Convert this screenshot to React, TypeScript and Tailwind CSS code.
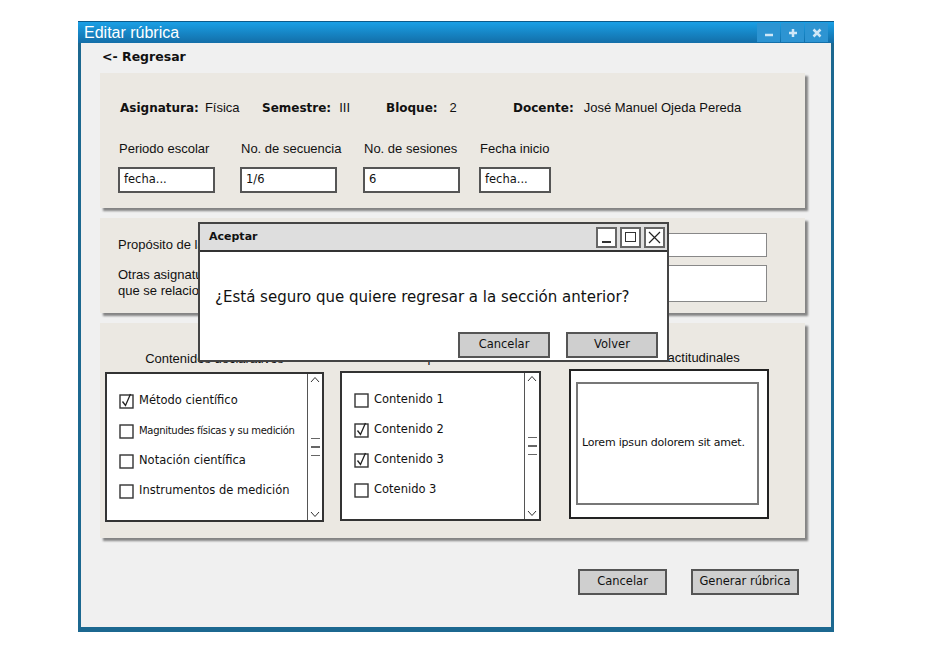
import React from 'react';

const comic = "font-['DejaVu_Sans',sans-serif]";
const sans = "font-['Liberation_Sans',Arial,sans-serif]";

function Check({ checked }: { checked?: boolean }) {
  return (
    <svg width="16" height="16" viewBox="0 0 16 16" className="shrink-0">
      <rect x="1" y="2" width="13" height="13" fill="white" stroke="#333" strokeWidth="1.4" />
      {checked && <path d="M3.5 8.5 L6.5 12.5 L11.5 1" fill="none" stroke="#222" strokeWidth="1.3" />}
    </svg>
  );
}

function ListBox({ width, items }: { width: string; items: { label: string; checked?: boolean; small?: boolean }[] }) {
  return (
    <div className={`${width} h-[150px] border-2 border-[#333] bg-white flex`}>
      <div className="flex-1 flex flex-col pl-[12px] pt-[18px] gap-[13px]">
        {items.map((it) => (
          <div key={it.label} className="flex items-center gap-[4px] h-[17px]">
            <Check checked={it.checked} />
            <span className={`${comic} text-[#111] ${it.small ? 'text-[10px] tracking-[-0.3px]' : 'text-[11.5px]'} whitespace-nowrap`}>{it.label}</span>
          </div>
        ))}
      </div>
      <div className="w-[15px] border-l border-[#555] flex flex-col items-center justify-between py-[2px] text-[#333]">
        <svg width="10" height="8" viewBox="0 0 10 8"><path d="M1 6 L5 1.5 L9 6" fill="none" stroke="#333" strokeWidth="1" /></svg>
        <div className="flex flex-col gap-[7px] w-[9px]">
          <div className="h-[1.5px] bg-[#666]" />
          <div className="h-[1.5px] bg-[#666]" />
          <div className="h-[1.5px] bg-[#666]" />
        </div>
        <svg width="10" height="8" viewBox="0 0 10 8"><path d="M1 2 L5 6.5 L9 2" fill="none" stroke="#333" strokeWidth="1" /></svg>
      </div>
    </div>
  );
}

function Field({ value, width }: { value: string; width: string }) {
  return (
    <div className={`${width} h-[26px] border-2 border-[#555] bg-white flex items-center px-[4px] ${comic} text-[11.5px] text-[#111]`}>
      {value}
    </div>
  );
}

function SketchButton({ label, width }: { label: string; width: string }) {
  return (
    <button className={`${width} h-[26px] bg-[#cfcfcf] border-2 border-[#555] ${comic} text-[11.5px] text-[#111]`}>
      {label}
    </button>
  );
}

export default function App() {
  const panel = 'bg-[#ebe8e2] shadow-[3px_3px_2px_rgba(0,0,0,0.45)]';

  return (
    <div className="w-[950px] h-[650px] bg-white relative overflow-hidden">
      <div className="absolute left-[78px] top-[21px] w-[756px] h-[611px] bg-[#1c6890] flex flex-col px-[3px] pb-[5px]">
        {/* Title bar */}
        <div className="h-[22px] flex items-center justify-between bg-gradient-to-b from-[#1aa0e6] to-[#136ea8] -mx-[3px] px-[6px] border-t border-[#0d5a8a]">
          <span className={`${sans} text-white text-[16px] leading-none`}>Editar rúbrica</span>
          <div className="flex gap-[1px]">
            <div className="w-[23px] h-[19px] bg-[#2d94d2] flex items-center justify-center">
              <svg width="10" height="10" viewBox="0 0 10 10"><path d="M1 7 H9" stroke="#cfe7f7" strokeWidth="2.5" /></svg>
            </div>
            <div className="w-[23px] h-[19px] bg-[#2d94d2] flex items-center justify-center">
              <svg width="10" height="10" viewBox="0 0 10 10"><path d="M1 5 H9 M5 1 V9" stroke="#cfe7f7" strokeWidth="2.5" /></svg>
            </div>
            <div className="w-[23px] h-[19px] bg-[#2d94d2] flex items-center justify-center">
              <svg width="10" height="10" viewBox="0 0 10 10"><path d="M1.5 1.5 L8.5 8.5 M8.5 1.5 L1.5 8.5" stroke="#cfe7f7" strokeWidth="2.5" /></svg>
            </div>
          </div>
        </div>

        {/* Content */}
        <div className="flex-1 bg-[#f0f0f0] pl-[19px] pr-[26px] relative">
          <div className={`${comic} font-bold text-[12.5px] text-[#111] pl-[2px] pt-[5px] h-[30px]`}>&lt;- Regresar</div>

          {/* Panel 1 */}
          <div className={`${panel} h-[135px] pl-[20px] pt-[27px]`}>
            <div className="flex items-center h-[16px] text-[#111]">
              <div className="w-[142px] flex gap-[6px] items-baseline">
                <span className={`${comic} font-bold text-[12px]`}>Asignatura:</span>
                <span className={`${sans} text-[13px]`}>Física</span>
              </div>
              <div className="w-[124px] flex gap-[8px] items-baseline">
                <span className={`${comic} font-bold text-[12px]`}>Semestre:</span>
                <span className={`${sans} text-[13px]`}>III</span>
              </div>
              <div className="w-[127px] flex gap-[12px] items-baseline">
                <span className={`${comic} font-bold text-[12px]`}>Bloque:</span>
                <span className={`${sans} text-[13px]`}>2</span>
              </div>
              <div className="flex gap-[10px] items-baseline">
                <span className={`${comic} font-bold text-[12px]`}>Docente:</span>
                <span className={`${sans} text-[13px]`}>José Manuel Ojeda Pereda</span>
              </div>
            </div>
            <div className="flex mt-[25px] -ml-[2px]">
              {[
                { l: 'Periodo escolar', v: 'fecha...', cw: 'w-[122px]', fw: 'w-[97px]' },
                { l: 'No. de secuencia', v: '1/6', cw: 'w-[123px]', fw: 'w-[97px]' },
                { l: 'No. de sesiones', v: '6', cw: 'w-[116px]', fw: 'w-[97px]' },
                { l: 'Fecha inicio', v: 'fecha...', cw: 'w-[100px]', fw: 'w-[72px]' },
              ].map((c) => (
                <div key={c.l} className={`${c.cw} flex flex-col gap-[10px]`}>
                  <span className={`${sans} text-[13px] text-[#111] pl-[1px] leading-[16px]`}>{c.l}</span>
                  <Field value={c.v} width={c.fw} />
                </div>
              ))}
            </div>
          </div>

          {/* Panel 2 */}
          <div className={`${panel} h-[95px] mt-[10px] flex pl-[18px] pr-[38px] pt-[15px]`}>
            <div className={`${sans} text-[13px] text-[#111] w-[80px] flex flex-col whitespace-nowrap`}>
              <span className="mt-[4px] leading-[16px]">Propósito de la secuencia</span>
              <span className="mt-[14px] leading-[16px]">Otras asignaturas<br />que se relacionan</span>
            </div>
            <div className="flex-1 flex flex-col gap-[8px] ml-[100px]">
              <div className="h-[24px] bg-white border border-[#888]" />
              <div className="h-[37px] bg-white border border-[#888]" />
            </div>
          </div>

          {/* Panel 3 */}
          <div className={`${panel} h-[215px] mt-[10px] flex pl-[5px] pt-[29px]`}>
            <div className="flex flex-col items-center gap-[6px]">
              <span className={`${sans} text-[13px] text-[#111] leading-[14px]`}>Contenidos declarativos</span>
              <ListBox
                width="w-[219px]"
                items={[
                  { label: 'Método científico', checked: true },
                  { label: 'Magnitudes físicas y su medición', small: true },
                  { label: 'Notación científica' },
                  { label: 'Instrumentos de medición' },
                ]}
              />
            </div>
            <div className="flex flex-col items-center gap-[6px] ml-[16px] -mt-[1px]">
              <span className={`${sans} text-[13px] text-[#111] leading-[14px]`}>Contenidos procedimentales</span>
              <ListBox
                width="w-[201px]"
                items={[
                  { label: 'Contenido 1' },
                  { label: 'Contenido 2', checked: true },
                  { label: 'Contenido 3', checked: true },
                  { label: 'Cotenido 3' },
                ]}
              />
            </div>
            <div className="flex flex-col items-center gap-[4px] ml-[28px] -mt-[1px]">
              <span className={`${sans} text-[13px] text-[#111] leading-[14px]`}>Contenidos actitudinales</span>
              <div className="w-[200px] h-[150px] border-2 border-[#222] bg-white pl-[5px] pr-[8px] pt-[11px] pb-[12px]">
                <div className="h-full border-2 border-[#777] flex items-center pl-[4px]">
                  <span className={`${comic} text-[11px] text-[#111] whitespace-nowrap tracking-[-0.2px]`}>Lorem ipsun dolorem sit amet.</span>
                </div>
              </div>
            </div>
          </div>

          {/* Footer buttons */}
          <div className="flex justify-end gap-[24px] mt-[31px] pr-[6px]">
            <SketchButton label="Cancelar" width="w-[89px]" />
            <SketchButton label="Generar rúbrica" width="w-[108px]" />
          </div>

          {/* Modal dialog */}
          <div className="absolute left-[117px] top-[179px] w-[471px] h-[140px] border-2 border-[#444] bg-white flex flex-col">
            <div className="h-[28px] bg-[#dedede] border-b-2 border-[#333] flex items-center justify-between pl-[9px] pr-[2px]">
              <span className={`${comic} font-bold text-[11px] text-[#111]`}>Aceptar</span>
              <div className="flex gap-[3px]">
                <div className="w-[21px] h-[21px] border-2 border-[#666] bg-white flex items-end justify-center pb-[3px]">
                  <div className="w-[9px] h-[1.5px] bg-[#333]" />
                </div>
                <div className="w-[21px] h-[21px] border-2 border-[#666] bg-white flex items-center justify-center">
                  <div className="w-[11px] h-[10px] border-[1.5px] border-[#333]" />
                </div>
                <div className="w-[21px] h-[21px] border-2 border-[#666] bg-white flex items-center justify-center">
                  <svg width="13" height="13" viewBox="0 0 13 13"><path d="M1 1 L12 12 M12 1 L1 12" stroke="#222" strokeWidth="1.2" /></svg>
                </div>
              </div>
            </div>
            <div className={`${comic} text-[15px] text-[#111] pl-[15px] pt-[36px] leading-[18px] whitespace-nowrap`}>
              ¿Está seguro que quiere regresar a la sección anterior?
            </div>
            <div className="flex justify-end gap-[16px] mt-[26px] pr-[9px]">
              <SketchButton label="Cancelar" width="w-[92px]" />
              <SketchButton label="Volver" width="w-[92px]" />
            </div>
          </div>
        </div>
      </div>
    </div>
  );
}
